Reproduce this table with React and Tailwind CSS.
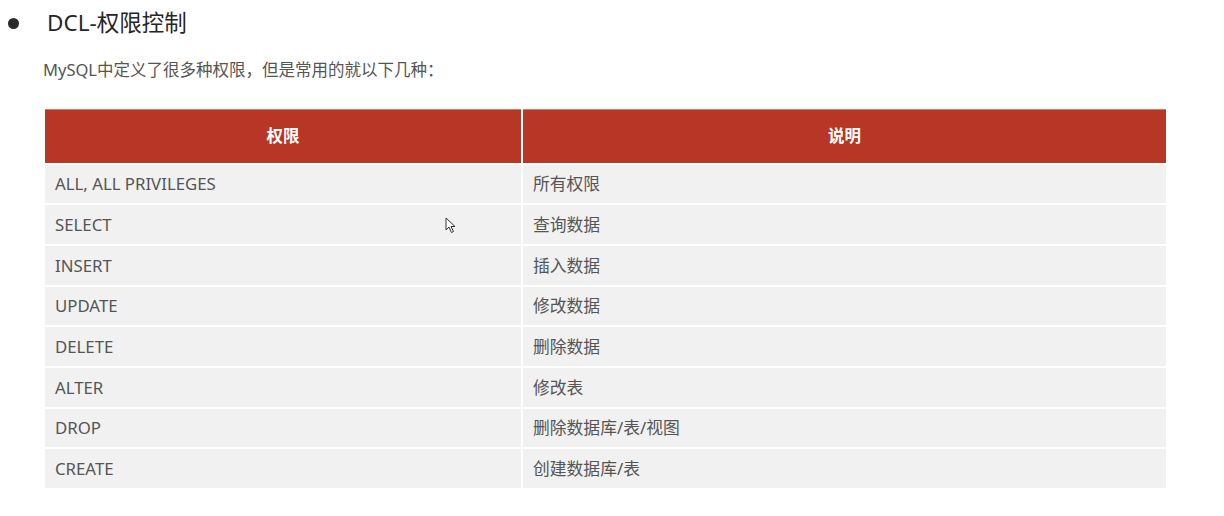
const rows = [
  ["ALL, ALL PRIVILEGES", "所有权限"],
  ["SELECT", "查询数据"],
  ["INSERT", "插入数据"],
  ["UPDATE", "修改数据"],
  ["DELETE", "删除数据"],
  ["ALTER", "修改表"],
  ["DROP", "删除数据库/表/视图"],
  ["CREATE", "创建数据库/表"],
];

function App() {
  return (
    <div
      className="relative w-[1224px] h-[516px] bg-white overflow-hidden"
      style={{ fontFamily: '"Noto Sans", "Noto Sans CJK SC", sans-serif' }}
    >
      {/* Heading */}
      <div className="flex items-center h-[46px] pl-[8px]">
        <span className="w-[11px] h-[11px] rounded-full bg-[#2b2b2b]" />
        <h1 className="ml-[28px] text-[22.5px] text-[#262626] leading-none">DCL-权限控制</h1>
      </div>
      <p className="pl-[43px] mt-[16px] text-[16.5px] text-[#555] leading-none">
        MySQL中定义了很多种权限，但是常用的就以下几种：
      </p>

      {/* Table */}
      <div className="ml-[45px] mt-[30px] w-[1121px] flex flex-col gap-[2px]">
        <div className="flex gap-[2px] h-[54px]">
          <div className="w-[476px] bg-[#b73626] border-t border-[#d8796c] flex items-center justify-center text-white font-bold text-[16.5px]">
            权限
          </div>
          <div className="flex-1 bg-[#b73626] border-t border-[#d8796c] flex items-center justify-center text-white font-bold text-[16.5px]">
            说明
          </div>
        </div>
        {rows.map(([k, v]) => (
          <div key={k} className="flex gap-[2px] h-[38.7px]">
            <div className="w-[476px] bg-[#f1f1f1] flex items-center pl-[10px] text-[16.8px] text-[#555]">{k}</div>
            <div className="flex-1 bg-[#f1f1f1] flex items-center pl-[10px] text-[16.8px] text-[#555]">{v}</div>
          </div>
        ))}
      </div>

      {/* Mouse pointer */}
      <svg className="absolute left-[445px] top-[217px]" width="12" height="17" viewBox="0 0 12 17">
        <path d="M1 1 L1 13 L4 10 L6.5 15.5 L8.5 14.5 L6 9.5 L10 9.5 Z" fill="white" stroke="#333" strokeWidth="1" strokeLinejoin="round" />
      </svg>
    </div>
  );
}

export default App;
